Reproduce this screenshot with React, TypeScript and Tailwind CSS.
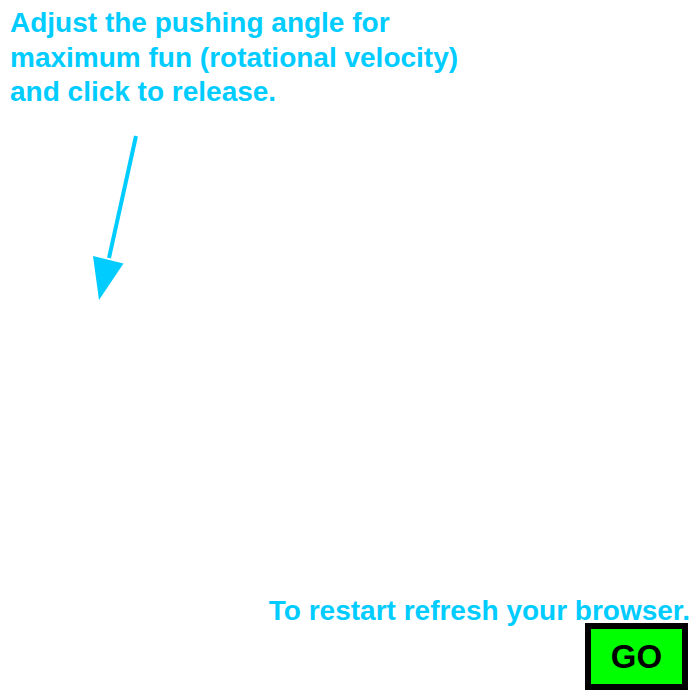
import React from "react";

export default function App() {
  return (
    <div
      className="relative w-[700px] h-[700px] bg-white flex flex-col overflow-hidden"
      style={{ fontFamily: '"Liberation Sans", Arial, sans-serif' }}
    >
      <p className="pl-[10px] pt-[6px] text-[28px] leading-[34.5px] font-bold text-[#00ccff]">
        Adjust the pushing angle for
        <br />
        maximum fun (rotational velocity)
        <br />
        and click to release.
      </p>

      <svg
        className="absolute left-0 top-0"
        width="700"
        height="700"
        viewBox="0 0 700 700"
      >
        <line x1="136" y1="136" x2="109" y2="258" stroke="#00ccff" strokeWidth="4" />
        <polygon points="93,256 123.5,263.5 99,300" fill="#00ccff" />
      </svg>

      <div className="flex-1" />

      <div className="flex flex-col items-end pb-[10px]">
        <p className="pr-[10px] mb-[-5px] text-[28px] leading-[35px] font-bold text-[#00ccff]">
          To restart refresh your browser.
        </p>
        <button className="mr-[12px] w-[103px] h-[67px] border-[6px] border-black bg-[#00ff00] flex items-center justify-center text-[33px] font-bold text-black leading-none">
          GO
        </button>
      </div>
    </div>
  );
}
